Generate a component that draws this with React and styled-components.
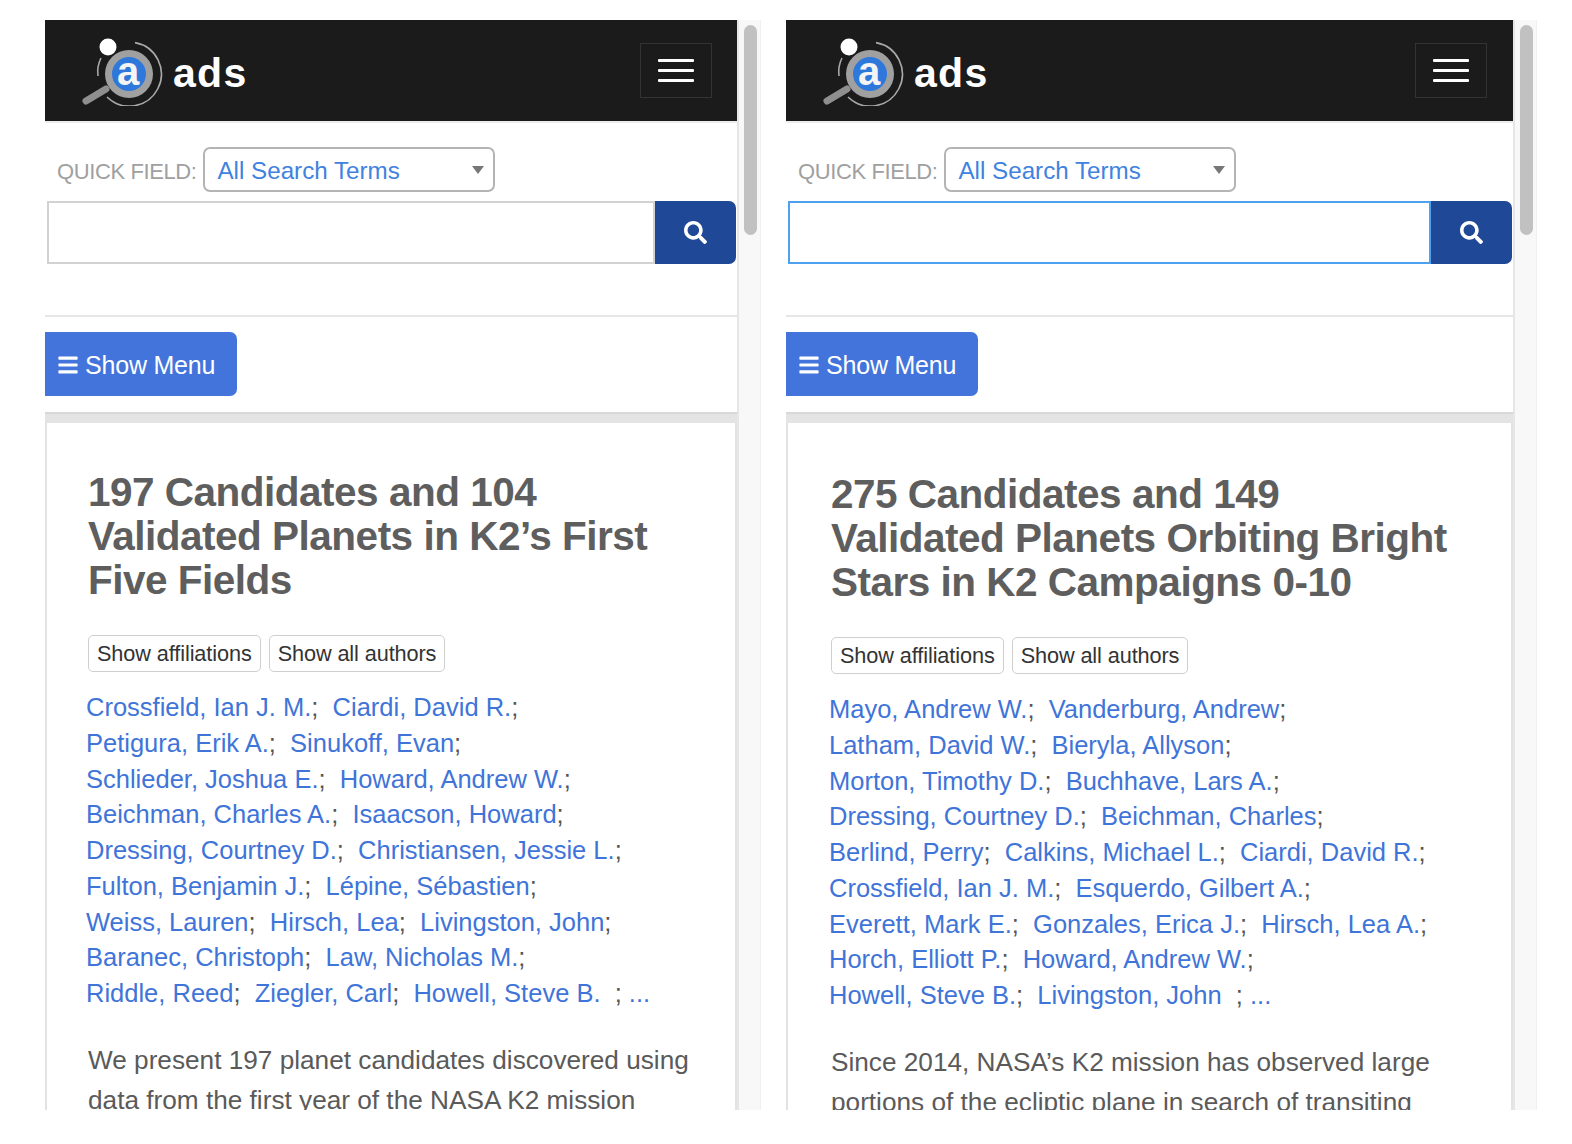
import React from 'react';
import styled, { createGlobalStyle } from 'styled-components';
import { FaSearch, FaBars } from 'react-icons/fa';

const GlobalStyle = createGlobalStyle`
  html, body {
    margin: 0;
    padding: 0;
    background: #fff;
    font-family: "Liberation Sans", Arial, sans-serif;
  }
`;

const Page = styled.div`
  display: flex;
  gap: 25px;
  width: 1572px;
  height: 1144px;
  padding: 20px 0 34px 45px;
  box-sizing: border-box;
`;

const Phone = styled.section`
  display: flex;
  flex: none;
  width: ${(p) => p.$width}px;
  height: 1090px;
  overflow: hidden;
`;

const Screen = styled.div`
  flex: 1;
  min-width: 0;
`;

const ScrollTrack = styled.div`
  flex: none;
  width: 24px;
  box-sizing: border-box;
  padding: 5px 3px 0 5px;
  background: #f8f8f8;
  border-left: 2px solid #e6e6e6;
  border-right: 1px solid #f0f0f0;
`;

const ScrollThumb = styled.div`
  height: 210px;
  border-radius: 7px;
  background: #c1c1c1;
`;

const NavBar = styled.header`
  display: flex;
  align-items: center;
  justify-content: space-between;
  height: 101px;
  padding: 0 ${(p) => p.$right}px 0 35px;
  background: #1b1b1b;
  box-shadow: 0 2px 0 #ececec;
`;

const Brand = styled.div`
  display: flex;
  align-items: center;
  gap: 9px;
  color: #fff;
`;

const BrandName = styled.span`
  font-size: 41px;
  font-weight: 700;
  letter-spacing: 1.3px;
  margin-top: 6px;
`;

const Toggle = styled.button`
  display: flex;
  flex-direction: column;
  justify-content: center;
  gap: 7px;
  width: 72px;
  height: 55px;
  padding: 0 17px;
  background: transparent;
  border: 1px solid #333;
`;

const ToggleBar = styled.span`
  display: block;
  height: 3px;
  border-radius: 1px;
  background: #fff;
`;

const FieldRow = styled.div`
  display: flex;
  align-items: center;
  gap: 7px;
  height: 45px;
  margin-top: 26px;
  padding-left: 12px;
`;

const FieldLabel = styled.label`
  color: #a0a0a0;
  font-size: 22px;
  margin-top: 5px;
  letter-spacing: -0.4px;
`;

const SelectBox = styled.div`
  position: relative;
  width: 292px;
  height: 45px;
  box-sizing: border-box;
  padding-left: 12px;
  border: 2px solid #b4b4b4;
  border-radius: 7px;
  color: #3f82e0;
  font-size: 24.2px;
  line-height: 44px;

  &::after {
    content: '';
    position: absolute;
    top: 17px;
    right: 9px;
    border-left: 6.5px solid transparent;
    border-right: 6.5px solid transparent;
    border-top: 8px solid #777;
  }
`;

const SearchRow = styled.div`
  display: flex;
  height: 63px;
  margin: 9px 1px 0 2px;
`;

const SearchInput = styled.div`
  flex: 1;
  box-sizing: border-box;
  border: 2px solid ${(p) => (p.$focused ? '#4ea1ee' : '#d2d2d2')};
`;

const SearchButton = styled.button`
  display: flex;
  flex: none;
  align-items: center;
  justify-content: center;
  width: 81px;
  padding: 0;
  border: none;
  border-radius: 0 7px 7px 0;
  background: #1f4896;
  color: #fff;
  font-size: 23px;
`;

const Divider = styled.hr`
  height: 2px;
  margin: 51px 0 0;
  border: none;
  background: #e6e6e6;
`;

const MenuButton = styled.button`
  display: flex;
  align-items: center;
  gap: 6px;
  width: 192px;
  height: 64px;
  margin-top: 15px;
  padding: 2px 0 0 12px;
  box-sizing: border-box;
  border: none;
  border-radius: 0 7px 7px 0;
  background: #4274dc;
  color: #fff;
  font-family: inherit;
  font-size: 25px;
  letter-spacing: -0.2px;
`;

const CardRule = styled.div`
  height: 11px;
  margin-top: 16px;
  box-sizing: border-box;
  background: #e4e4e4;
  border-top: 2px solid #d8d8d8;
`;

const Card = styled.article`
  padding: ${(p) => p.$top}px 30px 0 ${(p) => p.$left}px;
  border-left: 2px solid #e2e2e2;
  border-right: 2px solid #e2e2e2;
`;

const Title = styled.h1`
  margin: 0 0 33px 1px;
  color: #5e5e5e;
  font-size: 40.5px;
  font-weight: 700;
  line-height: 44px;
  letter-spacing: -0.5px;
`;

const ButtonRow = styled.div`
  display: flex;
  gap: 8px;
  margin-left: 1px;
`;

const GhostButton = styled.button`
  height: 37px;
  padding: 0 8px;
  background: #fff;
  border: 1.5px solid #cfcfcf;
  border-radius: 5px;
  color: #333;
  font-family: inherit;
  font-size: 21.7px;
  letter-spacing: -0.1px;
`;

const Authors = styled.ul`
  margin: 18px 0 0 -1px;
  padding: 0;
  list-style: none;
  font-size: 25.5px;
  line-height: 35.75px;
  color: #555;
`;

const AuthorLine = styled.li`
  white-space: nowrap;
`;

const AuthorLink = styled.a`
  color: #3f74d8;
`;

const Abstract = styled.p`
  margin: 28px 0 0 1px;
  color: #5a5a5a;
  font-size: 26.2px;
  line-height: 40px;
  white-space: pre-line;
`;

const Logo = () => (
  <svg width="84" height="70" viewBox="0 0 84 70" aria-hidden="true">
    <path d="M 55 6.6 A 32 32 0 1 1 27 61" fill="none" stroke="#a9a9a9" strokeWidth="1.6" />
    <path d="M 18 40 A 31 31 0 0 1 21 22" fill="none" stroke="#a9a9a9" strokeWidth="1.6" />
    <circle cx="49" cy="38" r="24" fill="#a0a0a0" />
    <circle cx="49" cy="38" r="17" fill="#2e78dc" />
    <text
      x="48"
      y="49"
      textAnchor="middle"
      fill="#f4f4f4"
      fontFamily="Liberation Sans, Arial, sans-serif"
      fontWeight="700"
      fontSize="40"
    >
      a
    </text>
    <line x1="26" y1="53" x2="6" y2="65" stroke="#8f8f8f" strokeWidth="7" strokeLinecap="round" />
    <circle cx="28" cy="11" r="8.5" fill="#fff" />
  </svg>
);

const papers = [
  {
    id: 'k2-first',
    width: 716,
    navRight: 25,
    cardTop: 47,
    cardLeft: 40,
    focused: false,
    title: '197 Candidates and 104\nValidated Planets in K2’s First\nFive Fields',
    authors: [
      ['Crossfield, Ian J. M.', 'Ciardi, David R.'],
      ['Petigura, Erik A.', 'Sinukoff, Evan'],
      ['Schlieder, Joshua E.', 'Howard, Andrew W.'],
      ['Beichman, Charles A.', 'Isaacson, Howard'],
      ['Dressing, Courtney D.', 'Christiansen, Jessie L.'],
      ['Fulton, Benjamin J.', 'Lépine, Sébastien'],
      ['Weiss, Lauren', 'Hirsch, Lea', 'Livingston, John'],
      ['Baranec, Christoph', 'Law, Nicholas M.'],
      ['Riddle, Reed', 'Ziegler, Carl', 'Howell, Steve B.'],
    ],
    abstract: 'We present 197 planet candidates discovered using\ndata from the first year of the NASA K2 mission',
  },
  {
    id: 'k2-bright',
    width: 751,
    navRight: 26,
    cardTop: 49,
    cardLeft: 42,
    focused: true,
    title: '275 Candidates and 149\nValidated Planets Orbiting Bright\nStars in K2 Campaigns 0-10',
    authors: [
      ['Mayo, Andrew W.', 'Vanderburg, Andrew'],
      ['Latham, David W.', 'Bieryla, Allyson'],
      ['Morton, Timothy D.', 'Buchhave, Lars A.'],
      ['Dressing, Courtney D.', 'Beichman, Charles'],
      ['Berlind, Perry', 'Calkins, Michael L.', 'Ciardi, David R.'],
      ['Crossfield, Ian J. M.', 'Esquerdo, Gilbert A.'],
      ['Everett, Mark E.', 'Gonzales, Erica J.', 'Hirsch, Lea A.'],
      ['Horch, Elliott P.', 'Howard, Andrew W.'],
      ['Howell, Steve B.', 'Livingston, John'],
    ],
    abstract: 'Since 2014, NASA’s K2 mission has observed large\nportions of the ecliptic plane in search of transiting',
  },
];

const PaperPhone = ({ paper }) => (
  <Phone $width={paper.width}>
    <Screen>
      <NavBar $right={paper.navRight}>
        <Brand>
          <Logo />
          <BrandName>ads</BrandName>
        </Brand>
        <Toggle aria-label="Toggle navigation">
          <ToggleBar />
          <ToggleBar />
          <ToggleBar />
        </Toggle>
      </NavBar>
      <FieldRow>
        <FieldLabel>QUICK FIELD:</FieldLabel>
        <SelectBox>All Search Terms</SelectBox>
      </FieldRow>
      <SearchRow>
        <SearchInput $focused={paper.focused} />
        <SearchButton aria-label="Search">
          <FaSearch />
        </SearchButton>
      </SearchRow>
      <Divider />
      <MenuButton>
        <FaBars size={22} />
        Show Menu
      </MenuButton>
      <CardRule />
      <Card $top={paper.cardTop} $left={paper.cardLeft}>
        <Title>
          {paper.title.split('\n').map((line) => (
            <div key={line}>{line}</div>
          ))}
        </Title>
        <ButtonRow>
          <GhostButton>Show affiliations</GhostButton>
          <GhostButton>Show all authors</GhostButton>
        </ButtonRow>
        <Authors>
          {paper.authors.map((line, i) => {
            const isLastLine = i === paper.authors.length - 1;
            return (
              <AuthorLine key={line[0]}>
                {line.map((name, j) => (
                  <React.Fragment key={name}>
                    <AuthorLink>{name}</AuthorLink>
                    {j < line.length - 1 ? ';\u00a0 ' : isLastLine ? '\u00a0 ; ' : ';'}
                  </React.Fragment>
                ))}
                {isLastLine && <AuthorLink>...</AuthorLink>}
              </AuthorLine>
            );
          })}
        </Authors>
        <Abstract>{paper.abstract}</Abstract>
      </Card>
    </Screen>
    <ScrollTrack>
      <ScrollThumb />
    </ScrollTrack>
  </Phone>
);

const App = () => (
  <>
    <GlobalStyle />
    <Page>
      {papers.map((paper) => (
        <PaperPhone key={paper.id} paper={paper} />
      ))}
    </Page>
  </>
);

export default App;
